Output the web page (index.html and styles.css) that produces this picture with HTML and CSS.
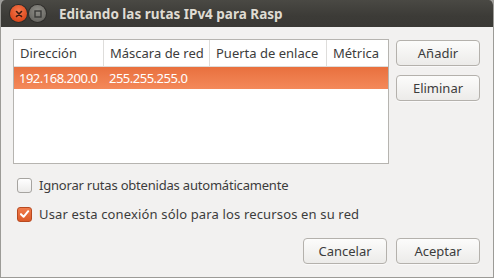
FILE: index.html
```html
<!DOCTYPE html>
<html lang="es">
<head>
<meta charset="utf-8">
<title>Editando las rutas IPv4 para Rasp</title>
<link rel="stylesheet" href="styles.css">
</head>
<body>
<div class="window">
  <div class="titlebar">
    <span class="wbtn close"><svg width="16" height="16" viewBox="0 0 16 16"><path d="M5.5 5.5 L10.5 10.5 M10.5 5.5 L5.5 10.5" stroke="#3a1a10" stroke-width="1.6" stroke-linecap="round"/></svg></span>
    <span class="wbtn min"><svg width="16" height="16" viewBox="0 0 16 16"><rect x="5" y="5" width="6" height="6" fill="none" stroke="#3a3a38" stroke-width="1.4"/></svg></span>
    <span class="title">Editando las rutas IPv4 para Rasp</span>
  </div>
  <div class="content">
    <div class="main">
      <div class="table">
        <div class="row head">
          <div class="c c1">Dirección</div>
          <div class="c c2">Máscara de red</div>
          <div class="c c3">Puerta de enlace</div>
          <div class="c c4">Métrica</div>
        </div>
        <div class="row sel">
          <div class="c c1">192.168.200.0</div>
          <div class="c c2">255.255.255.0</div>
          <div class="c c3"></div>
          <div class="c c4"></div>
        </div>
      </div>
      <div class="side">
        <button class="btn">Añadir</button>
        <button class="btn">Eliminar</button>
      </div>
    </div>
    <div class="checks">
      <label class="check"><span class="box"></span><span class="lbl1">Ignorar rutas obtenidas automáticamente</span></label>
      <label class="check"><span class="box on"><svg width="14" height="14" viewBox="0 0 14 14"><path d="M3.2 7.2 L6 10 L11 4" fill="none" stroke="#fff" stroke-width="2.2" stroke-linecap="round" stroke-linejoin="round"/></svg></span><span class="lbl2">Usar esta conexión sólo para los recursos en su red</span></label>
    </div>
    <div class="actions">
      <button class="btn">Cancelar</button>
      <button class="btn">Aceptar</button>
    </div>
  </div>
</div>
</body>
</html>
```
FILE: styles.css
```css
* { box-sizing: border-box; }
html, body { margin: 0; padding: 0; background: #9c9b97; }
body { font-family: "Noto Sans", "Open Sans", sans-serif; font-size: 13px; color: #3c3c3c; }
.window {
  width: 494px; height: 278px;
  background: #f2f1f0;
  border: 1px solid #9c9b97;
  border-top: none;
  border-radius: 5px 5px 0 0;
  overflow: hidden;
  display: flex; flex-direction: column;
}
.titlebar {
  height: 27px; flex: none;
  background: linear-gradient(#4a4944, #3c3b37 60%, #3a3935);
  display: flex; align-items: center;
  padding-left: 10px;
  margin: 0 -1px;
}
.wbtn {
  width: 17px; height: 17px; border-radius: 50%;
  display: flex; align-items: center; justify-content: center;
  margin-right: 1px;
}
.wbtn svg { display: block; }
.close { background: radial-gradient(circle at 50% 35%, #f57a4e, #de4a1e 70%, #c03d15); box-shadow: 0 0 0 1px #2e2d2a; }
.min { background: radial-gradient(circle at 50% 35%, #8f8e88, #6c6b66 70%, #5a5954); box-shadow: 0 0 0 1px #2e2d2a; margin-left: 1px; }
.title {
  margin-left: 12px;
  color: #dfdbd2; font-weight: bold; font-size: 13.5px;
  white-space: nowrap;
}
.content {
  flex: 1;
  padding: 12px 13px 13px 12px;
  display: flex; flex-direction: column;
}
.main { display: flex; gap: 7px; }
.table {
  width: 376px; height: 125px;
  background: #fff;
  border: 1px solid #b6b4b0;
}
.row { display: flex; }
.row .c { white-space: nowrap; overflow: hidden; padding-left: 6px; }
.c1 { width: 90px; }
.c2 { width: 106px; }
.c3 { width: 117px; }
.c4 { flex: 1; }
.head { height: 27px; align-items: center; border-bottom: 1px solid #dedddb; }
.head .c { height: 100%; display: flex; align-items: center; border-right: 1px solid #dedddb; }
.head .c4 { border-right: none; }
.sel { height: 22px; align-items: center; background: linear-gradient(#e9703e, #f4895a); color: #fff; letter-spacing: -0.5px; }
.sel .c { padding-left: 5px; }
.side { display: flex; flex-direction: column; gap: 9px; padding-top: 1px; }
.btn {
  font: inherit; color: #3c3c3c;
  width: 84px; height: 26px;
  border: 1px solid #b4b1ac;
  border-radius: 4px;
  background: linear-gradient(#fcfcfb, #ecebe9);
  padding: 0;
  box-shadow: 0 1px 0 rgba(255,255,255,0.6);
}
.checks { display: flex; flex-direction: column; gap: 11px; padding-top: 12px; padding-left: 4px; }
.check { display: flex; align-items: center; height: 18px; }
.lbl1 { letter-spacing: -0.2px; }
.lbl2 { letter-spacing: 0.15px; }
.box {
  width: 15px; height: 15px; margin-right: 7px;
  border: 1px solid #a6a4a0; border-radius: 3px;
  background: linear-gradient(#ffffff, #ecebea);
  display: flex; align-items: center; justify-content: center;
}
.box.on { background: linear-gradient(#f07c4c, #dc5a28); border-color: #b84a20; }
.box svg { display: block; }
.actions { margin-top: auto; display: flex; justify-content: flex-end; gap: 9px; }
```
